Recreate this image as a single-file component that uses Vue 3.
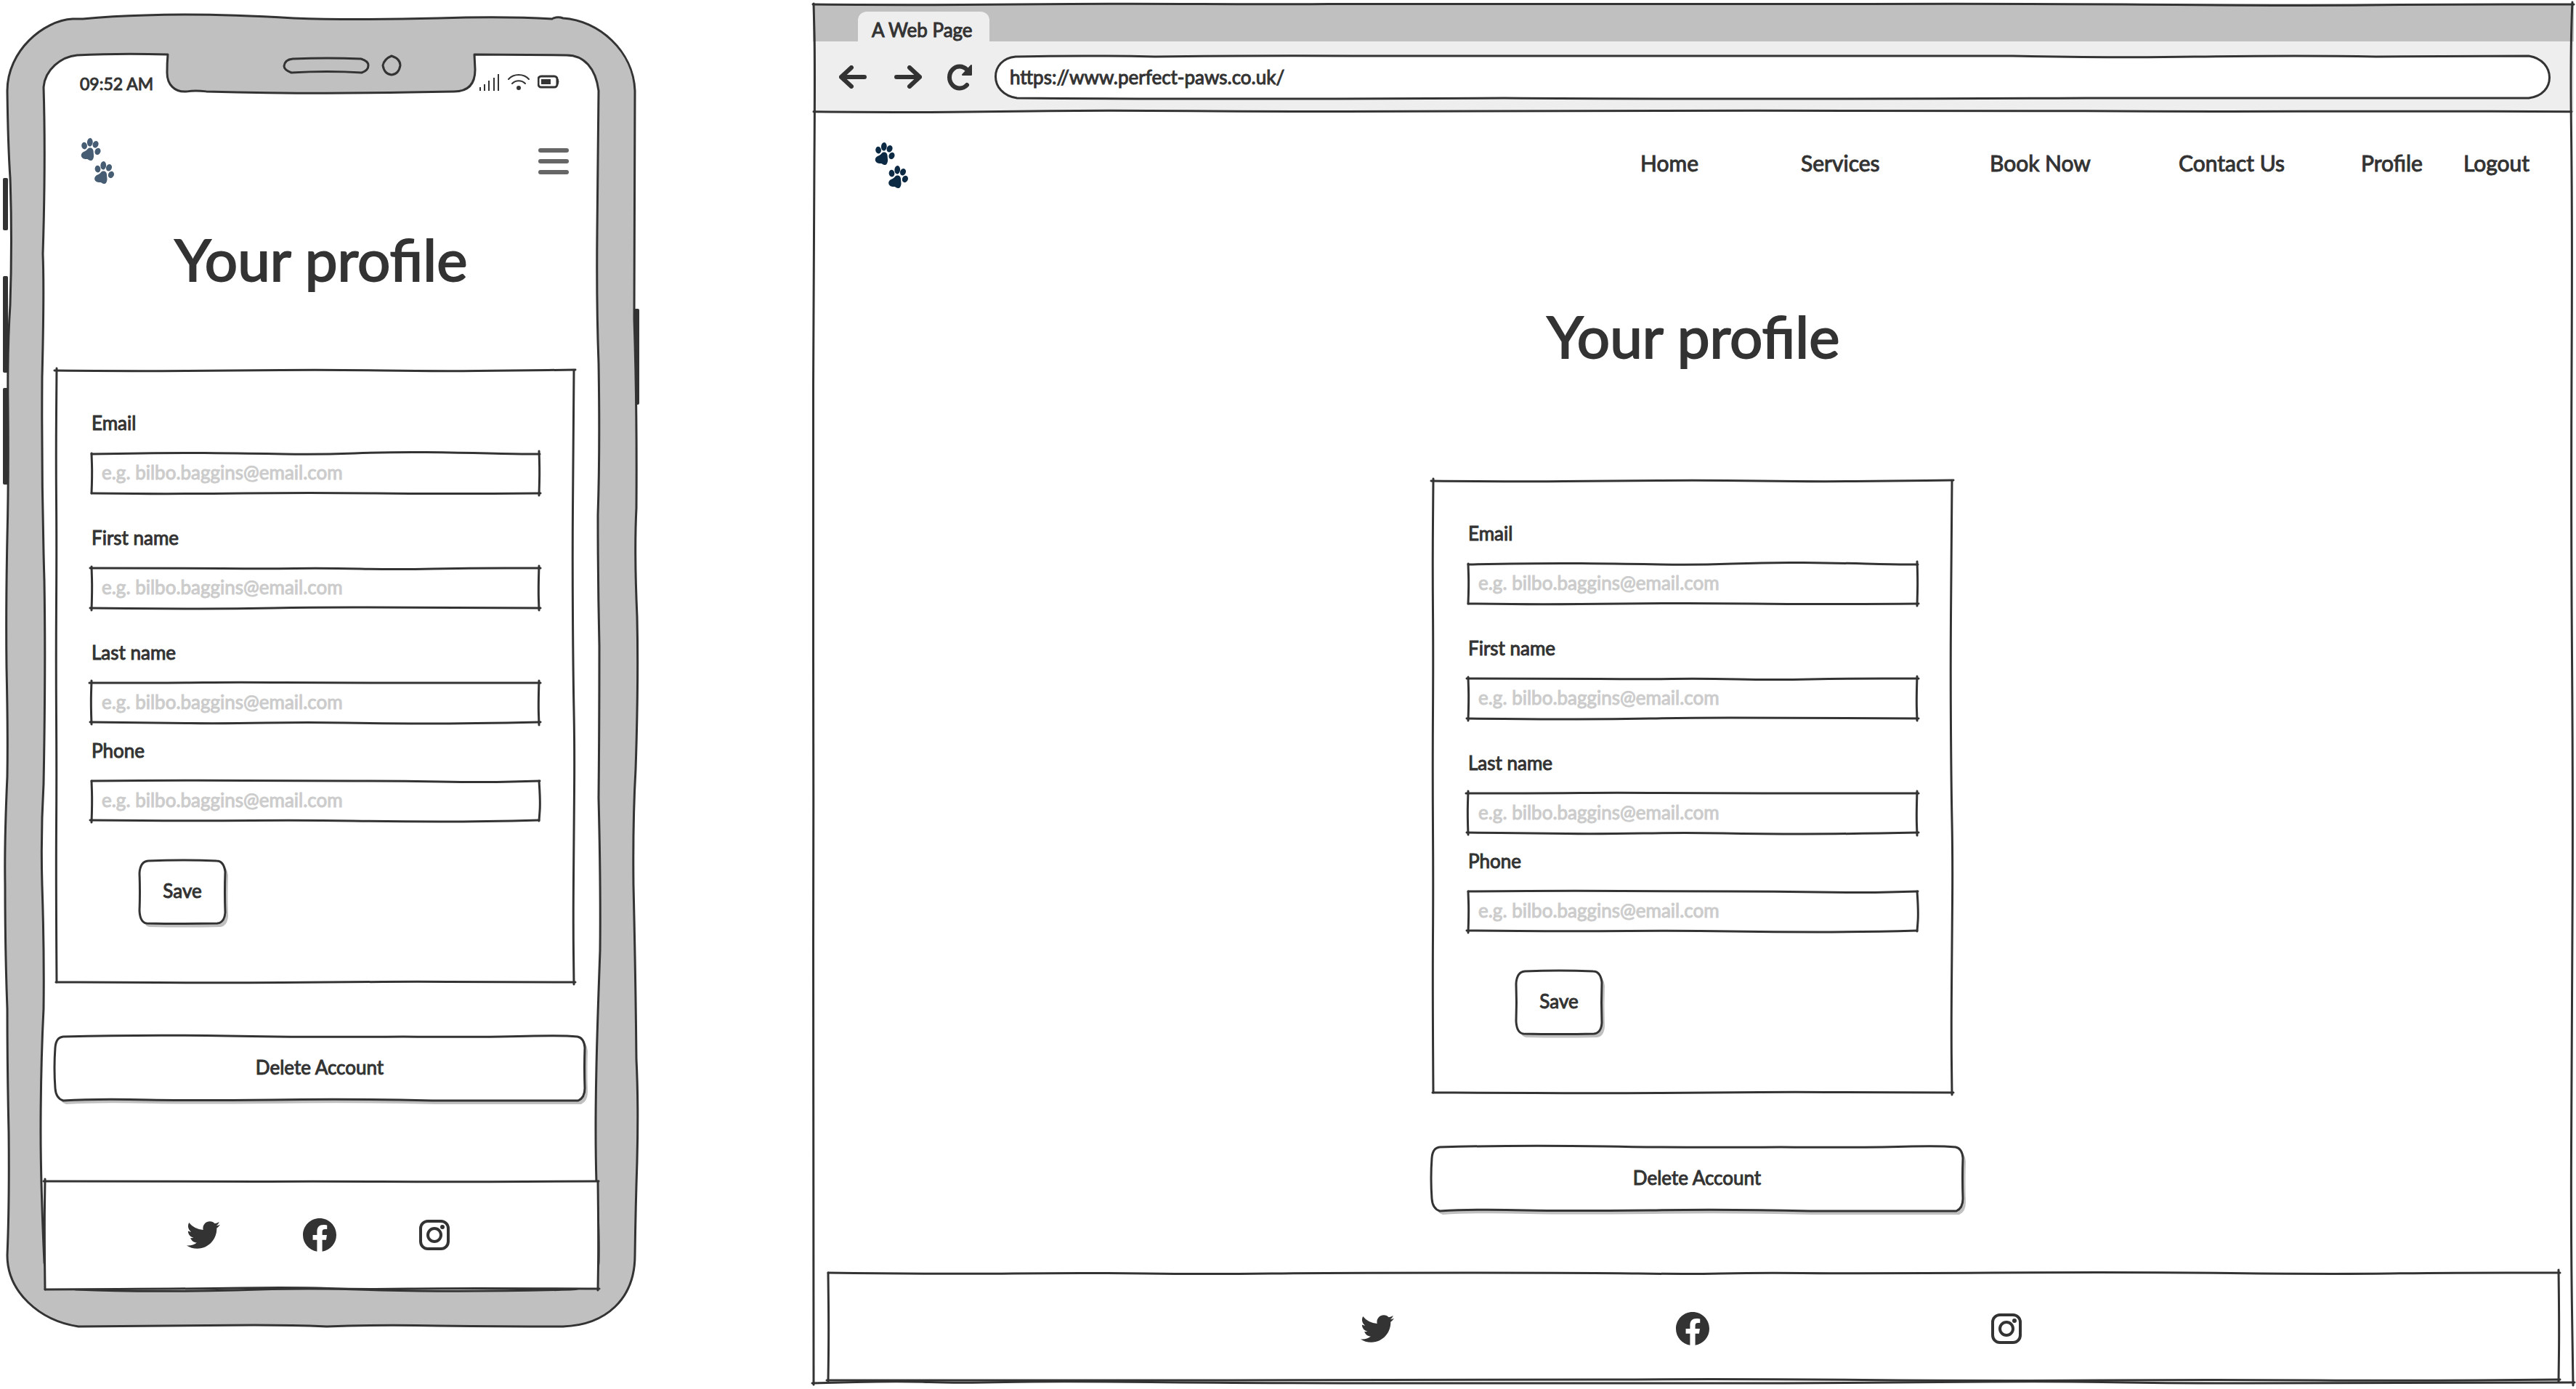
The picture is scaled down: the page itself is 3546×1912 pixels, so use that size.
<script setup>
import { h, reactive } from 'vue'

/* Turns a list of [x, y] points into one soft hand-drawn stroke. */
function stroke(points) {
  const [first, ...rest] = points
  let d = `M${first[0]} ${first[1]}`
  for (let i = 0; i < rest.length - 1; i++) {
    const [x, y] = rest[i]
    const [nx, ny] = rest[i + 1]
    d += ` Q${x} ${y} ${(x + nx) / 2} ${(y + ny) / 2}`
  }
  const last = rest[rest.length - 1]
  return `${d} L${last[0]} ${last[1]}`
}

/* Ink outline that stretches with the box it belongs to. */
const Sketch = (props) =>
  h(
    'svg',
    { viewBox: props.box, preserveAspectRatio: 'none', 'aria-hidden': 'true' },
    props.shapes.map((s) =>
      h('path', {
        d: s.d,
        fill: s.fill || 'none',
        stroke: s.ink === false ? 'none' : '#333',
        'stroke-width': 3,
        'stroke-linecap': 'round',
        'stroke-linejoin': 'round',
        'vector-effect': 'non-scaling-stroke',
        transform: s.shift
      })
    )
  )
Sketch.props = ['box', 'shapes']

const lines = (...edges) => edges.map((e) => ({ d: stroke(e) }))

const inputFrames = [
  lines(
    [[0, 1], [92, -1], [219, 0], [310, 2], [414, -2], [506, -1], [586, 1], [617, 1]],
    [[616, -3], [617, 20], [616, 58]],
    [[618, 55], [480, 56], [300, 54], [120, 56], [0, 55]],
    [[0, 55], [1, 30], [0, 0]]
  ),
  lines(
    [[-2, 0], [120, 0], [240, 1], [320, 0], [420, 2], [520, 0], [618, 0]],
    [[616, -3], [615, 28], [616, 58]],
    [[618, 55], [420, 54], [300, 54], [200, 56], [100, 56], [-2, 55]],
    [[0, 58], [1, 30], [0, -2]]
  ),
  lines(
    [[-3, 0], [110, 0], [200, -1], [330, 0], [480, 0], [618, 0]],
    [[616, -3], [615, 28], [616, 58]],
    [[618, 54], [520, 56], [400, 56], [300, 54], [180, 56], [90, 55], [-2, 54]],
    [[0, 57], [-1, 30], [0, -3]]
  ),
  lines(
    [[0, 0], [120, -1], [300, 0], [420, 0], [540, 2], [617, 0]],
    [[616, 0], [618, 28], [616, 55]],
    [[616, 54], [540, 56], [420, 56], [300, 54], [140, 55], [-2, 54]],
    [[0, 57], [1, 30], [0, 0]]
  )
]

const cardFrame = lines(
  [[-2, 0], [120, 1], [240, 0], [380, -1], [520, 1], [640, 0], [715, -1]],
  [[713, 0], [712, 120], [711, 260], [712, 420], [714, 520], [713, 640], [712, 760], [713, 847]],
  [[715, 844], [580, 844], [500, 843], [400, 844], [220, 845], [60, 844], [0, 844]],
  [[1, 844], [0, 700], [1, 560], [0, 400], [1, 240], [0, 120], [1, -3]]
)

const saveShape =
  'M12 1 Q60 -1 106 1 Q116 1 118 16 Q117 44 118 72 Q117 86 107 87 Q60 88 10 87 Q1 86 0 70 Q1 44 0 18 Q1 2 12 1Z'
const saveFrame = [
  { d: saveShape, fill: '#c0c0c0', ink: false, shift: 'translate(4 5)' },
  { d: saveShape, fill: '#fff' }
]

const deleteShape =
  'M12 1 Q120 -2 240 0 Q330 2 480 1 Q600 2 660 0 Q700 -1 720 1 Q729 3 730 16 Q729 44 730 72 Q730 85 721 89 Q600 89 520 89 Q400 86 300 88 Q180 89 130 88 Q60 86 12 89 Q2 86 1 72 Q-1 44 1 16 Q2 2 12 1Z'
const deleteFrame = [
  { d: deleteShape, fill: '#c0c0c0', ink: false, shift: 'translate(4 5)' },
  { d: deleteShape, fill: '#fff' }
]

const phoneBody = [
  {
    d: 'M96 6 C56 8 6 50 6 105 Q7 180 10 225 Q13 310 10 400 Q6 460 7 540 Q8 640 6 720 Q4 820 5 900 Q7 990 6 1050 Q2 1140 3 1200 Q3 1290 6 1370 Q6 1450 8 1540 Q9 1640 6 1710 C6 1760 50 1800 104 1808 Q250 1807 346 1806 Q400 1806 446 1808 Q520 1805 600 1807 Q700 1808 771 1808 C830 1806 870 1770 870 1710 Q871 1640 873 1580 Q875 1500 872 1440 Q871 1330 868 1200 Q867 1110 871 1040 Q875 920 873 830 Q869 740 872 680 Q873 540 869 420 Q870 260 870 105 C868 50 820 8 771 5 Q763 2 756 6 Q690 2 600 5 Q480 8 400 5 Q280 -2 196 1 Q150 2 110 6 Z',
    fill: '#c0c0c0'
  }
]

const phoneScreen = [
  {
    d: 'M102 56 Q160 53 227 55 Q226 66 226 80 C226 96 236 108 254 106 Q264 104 280 106 Q430 110 560 107 L621 106 C644 106 650 92 650 76 L649 55 L776 56 C800 56 816 74 820 105 Q819 200 818 300 Q817 400 820 480 Q822 600 819 690 Q819 780 821 870 Q821 980 820 1080 Q823 1200 822 1290 Q818 1400 817 1450 Q815 1540 817 1610 Q821 1680 820 1720 C819 1740 806 1757 781 1757 Q640 1761 520 1758 Q420 1754 320 1758 Q190 1761 101 1757 C80 1755 60 1740 57 1720 Q52 1610 52 1540 Q52 1450 56 1370 Q57 1290 54 1200 Q52 1130 56 1060 Q59 900 57 780 Q53 640 54 500 Q57 380 55 330 Q59 200 56 100 C58 76 80 58 102 56Z',
    fill: '#fff'
  }
]

const speaker = [
  { d: 'M12 1 Q60 -1 106 1 Q116 4 116 10 Q116 17 107 20 Q60 17 10 20 Q0 16 0 11 Q1 2 12 1Z' }
]
const camera = [{ d: 'M12 0 Q24 4 24 13 Q22 25 12 26 Q2 25 0 13 Q2 4 12 0Z' }]

const browserFrame = lines(
  [[0, 1], [130, 2], [280, 1], [430, 0], [640, 1], [780, 0], [1200, 1], [1700, 0], [2050, 3], [2230, 1], [2424, 1]],
  [[2422, -2], [2419, 60], [2422, 300], [2420, 700], [2423, 1100], [2421, 1450], [2420, 1700], [2423, 1905]],
  [[2425, 1901], [2100, 1902], [1850, 1902], [1700, 1899], [1400, 1902], [1100, 1902], [600, 1902], [330, 1899], [200, 1902], [120, 1899], [-1, 1902]],
  [[1, 1904], [0, 1500], [1, 1100], [0, 700], [1, 350], [3, 80], [1, 0]],
  [[1, 149], [130, 150], [250, 149], [400, 147], [640, 149], [1000, 148], [1600, 147], [1900, 149], [2200, 148], [2421, 149]]
)

const urlFrame = [
  {
    d: 'M28 1 Q120 -1 220 1 Q350 -1 520 0 L1400 0 Q1550 3 1650 1 Q1800 -1 1900 1 L2110 0 C2148 6 2148 54 2110 58 L1500 58 Q1000 60 700 58 Q300 60 30 58 C-10 52 -8 4 28 1Z',
    fill: '#fff'
  }
]

const phoneFooter = lines(
  [[-2, 0], [220, 1], [360, 0], [560, 1], [761, 0]],
  [[760, 0], [761, 80], [760, 150]],
  [[762, 148], [560, 147], [440, 149], [340, 146], [200, 148], [0, 149]],
  [[0, 149], [-1, 70], [0, -3]]
)

const browserFooter = lines(
  [[0, 0], [160, 2], [350, 0], [520, 2], [700, 0], [1050, 0], [1180, 2], [1280, 0], [1400, 1], [1800, -1], [2060, 2], [2240, 0], [2384, 0]],
  [[2382, -4], [2383, 70], [2382, 150]],
  [[2384, 147], [2200, 149], [1900, 147], [1600, 149], [1250, 146], [900, 148], [200, 148], [-2, 148]],
  [[0, 149], [1, 90], [0, 0]]
)

const fields = [
  { id: 'email', label: 'Email', type: 'email' },
  { id: 'first', label: 'First name', type: 'text' },
  { id: 'last', label: 'Last name', type: 'text' },
  { id: 'phone', label: 'Phone', type: 'tel' }
]
const views = reactive([
  { kind: 'phone', values: {}, footerBox: '0 0 760 148', footer: phoneFooter },
  { kind: 'browser', values: {}, footerBox: '0 0 2382 148', footer: browserFooter }
])
const links = ['Home', 'Services', 'Book Now', 'Contact Us', 'Profile', 'Logout']
</script>

<template>
  <div class="board">
    <section v-for="view in views" :key="view.kind" :class="view.kind">
      <template v-if="view.kind === 'phone'">
        <span class="side-key key-a"></span>
        <span class="side-key key-b"></span>
        <span class="side-key key-c"></span>
        <span class="side-key key-d"></span>
        <Sketch class="ink" box="0 0 876 1810" :shapes="phoneBody" />
        <Sketch class="ink" box="0 0 876 1810" :shapes="phoneScreen" />
        <div class="sensors">
          <Sketch class="speaker" box="0 0 116 20" :shapes="speaker" />
          <Sketch class="camera" box="0 0 24 26" :shapes="camera" />
        </div>
        <div class="status">
          <time>09:52 AM</time>
          <div class="status-icons">
            <svg width="28" height="24" viewBox="0 0 28 24" fill="none" stroke="#333" stroke-width="2">
              <path d="M1 24v-5M7 24V15M13 24V10M20 24V6M26 24V1" />
            </svg>
            <svg width="30" height="24" viewBox="0 0 30 24" fill="none" stroke="#333" stroke-width="2" stroke-linecap="round">
              <path d="M1 8C8 0 22 0 29 8M6 14C11 9 19 9 24 14" />
              <ellipse cx="15" cy="20" rx="2" ry="2" fill="#333" />
            </svg>
            <svg width="30" height="24" viewBox="0 0 30 24">
              <rect x="1" y="4" width="26" height="15" rx="4" fill="none" stroke="#333" stroke-width="3" />
              <rect x="5" y="8" width="13" height="7" fill="#333" />
              <path d="M28 8q2 3 0 7z" fill="#333" stroke="#333" />
            </svg>
          </div>
        </div>
      </template>

      <template v-else>
        <div class="tabs"><div class="tab">A Web Page</div></div>
        <div class="toolbar">
          <button class="tool" type="button" aria-label="Back">
            <svg width="38" height="32" viewBox="0 0 38 32"><path d="M17 3L3 16l14 13M3 16h32" /></svg>
          </button>
          <button class="tool forward" type="button" aria-label="Forward">
            <svg width="38" height="32" viewBox="0 0 38 32"><path d="M21 3l14 13-14 13M35 16H3" /></svg>
          </button>
          <button class="tool reload" type="button" aria-label="Reload">
            <svg width="38" height="38" viewBox="0 0 38 38">
              <path d="M29 30A14 15 0 1 1 29 9" />
              <path class="solid" d="M35 3v13H23z" />
            </svg>
          </button>
          <div class="url">
            <Sketch class="ink" box="0 0 2139 58" :shapes="urlFrame" />
            <input type="text" aria-label="Address" value="https://www.perfect-paws.co.uk/" />
          </div>
        </div>
        <Sketch class="ink" box="0 0 2424 1903" :shapes="browserFrame" />
      </template>

      <header class="site-head">
        <a class="logo" href="#" aria-label="Perfect Paws">
          <svg width="47" height="64" viewBox="0 0 48 66" fill="currentColor">
            <g v-for="n in 2" :key="n" :transform="n === 1 ? 'translate(0 0)' : 'translate(19 33)'">
              <ellipse cx="5" cy="11" rx="4" ry="5" transform="rotate(-6 5 11)" />
              <ellipse cx="13" cy="6" rx="4" ry="6" transform="rotate(4 13 6)" />
              <ellipse cx="21" cy="9" rx="4" ry="5" transform="rotate(22 21 9)" />
              <ellipse cx="24" cy="19" rx="4" ry="5" transform="rotate(24 24 19)" />
              <path d="M12 14c4-1 6 2 6 6 0 3 1 5 0 8-1 4-4 5-7 3-2-2-5 0-8-2-4-3-3-8 2-10 4-1 4-4 7-5z" />
            </g>
          </svg>
        </a>
        <button v-if="view.kind === 'phone'" class="menu" type="button" aria-label="Menu">
          <span></span><span></span><span></span>
        </button>
        <nav v-else class="nav">
          <a v-for="link in links" :key="link" href="#">{{ link }}</a>
        </nav>
      </header>

      <h1>Your profile</h1>

      <main class="profile">
        <form class="card" @submit.prevent>
          <Sketch class="ink" box="0 0 714 844" :shapes="cardFrame" />
          <div v-for="(field, i) in fields" :key="field.id" class="field">
            <label :for="`${view.kind}-${field.id}`">{{ field.label }}</label>
            <div class="control">
              <Sketch class="ink" box="0 0 616 55" :shapes="inputFrames[i]" />
              <input
                :id="`${view.kind}-${field.id}`"
                v-model="view.values[field.id]"
                :type="field.type"
                placeholder="e.g. bilbo.baggins@email.com"
              />
            </div>
          </div>
          <button class="sketch-button save" type="submit">
            <Sketch class="ink" box="0 0 118 87" :shapes="saveFrame" />
            <span>Save</span>
          </button>
        </form>
        <button class="sketch-button delete" type="button">
          <Sketch class="ink" box="0 0 730 89" :shapes="deleteFrame" />
          <span>Delete Account</span>
        </button>
      </main>

      <footer class="social">
        <Sketch class="ink" :box="view.footerBox" :shapes="view.footer" />
        <a href="#" aria-label="Twitter">
          <svg width="46" height="46" viewBox="0 0 512 512" fill="#333">
            <path d="M459.37 151.716c.325 4.548.325 9.097.325 13.645 0 138.72-105.583 298.558-298.558 298.558-59.452 0-114.68-17.219-161.137-47.106 8.447.974 16.568 1.299 25.34 1.299 49.055 0 94.213-16.568 130.274-44.832-46.132-.975-84.792-31.188-98.112-72.772 6.498.974 12.995 1.624 19.818 1.624 9.421 0 18.843-1.3 27.614-3.573-48.081-9.747-84.143-51.98-84.143-102.985v-1.299c13.969 7.797 30.214 12.67 47.431 13.319-28.264-18.843-46.781-51.005-46.781-87.391 0-19.492 5.197-37.36 14.294-52.954 51.655 63.675 129.3 105.258 216.365 109.807-1.624-7.797-2.599-15.918-2.599-24.04 0-57.828 46.782-104.934 104.934-104.934 30.213 0 57.502 12.67 76.67 33.137 23.715-4.548 46.456-13.32 66.599-25.34-7.798 24.366-24.366 44.833-46.132 57.827 21.117-2.273 41.584-8.122 60.426-16.243-14.292 20.791-32.161 39.308-52.628 54.253z" />
          </svg>
        </a>
        <a href="#" aria-label="Facebook">
          <svg width="46" height="46" viewBox="8 8 496 496" fill="#333">
            <path d="M504 256C504 119 393 8 256 8S8 119 8 256c0 123.78 90.69 226.38 209.25 245V327.69h-63V256h63v-54.64c0-62.15 37-96.48 93.67-96.48 27.14 0 55.52 4.84 55.52 4.84v61h-31.28c-30.8 0-40.41 19.12-40.41 38.73V256h68.78l-11 71.69h-57.78V501C413.31 482.38 504 379.78 504 256z" />
          </svg>
        </a>
        <a href="#" aria-label="Instagram">
          <svg width="42" height="42" viewBox="0 0 42 42" fill="none" stroke="#333" stroke-width="4">
            <rect x="2" y="2" width="38" height="38" rx="10" />
            <circle cx="21" cy="21" r="9" />
            <circle cx="32" cy="10" r="3" fill="#333" stroke="none" />
          </svg>
        </a>
      </footer>
    </section>
  </div>
</template>

<style>
body {
  background: #fff;
}
</style>

<style scoped>
.board {
  display: grid;
  grid-template-columns: 876fr 2424fr;
  column-gap: 239px;
  align-items: start;
  box-sizing: border-box;
  padding: 5px 3px 5px 4px;
  color: #333;
  font: 400 26px/32px Lato, "Open Sans", sans-serif;
  -webkit-text-stroke: 1px;
  overflow: hidden;
}

.phone,
.browser,
.card,
.control,
.url,
.social,
.sketch-button {
  position: relative;
}

.ink {
  position: absolute;
  inset: 0;
  width: 100%;
  height: 100%;
  overflow: visible;
  pointer-events: none;
}

a {
  color: inherit;
  text-decoration: none;
}

button,
input {
  font: inherit;
  color: inherit;
  border: 0;
  padding: 0;
  background: none;
  outline: 0;
}

svg {
  display: block;
}

/* Phone shell */
.phone {
  margin-top: 15px;
  padding: 75px 56px 54px;
}

.side-key {
  position: absolute;
  left: 0;
  width: 7px;
  border-radius: 2px;
  background: #333;
}

.key-a {
  top: 225px;
  height: 72px;
}

.key-b {
  top: 360px;
  height: 133px;
}

.key-c {
  top: 514px;
  height: 133px;
}

.key-d {
  top: 405px;
  right: 0;
  left: auto;
  height: 132px;
}

.sensors {
  position: absolute;
  top: 57px;
  left: 0;
  right: 0;
  display: flex;
  align-items: center;
  justify-content: center;
  gap: 20px;
  padding-left: 58px;
  box-sizing: border-box;
}

.speaker {
  width: 116px;
  height: 20px;
  overflow: visible;
}

.camera {
  width: 24px;
  height: 26px;
  overflow: visible;
}

.status {
  position: relative;
  display: flex;
  align-items: center;
  justify-content: space-between;
  height: 40px;
  padding: 0 54px 0 50px;
  font-size: 23px;
}

.status-icons {
  display: flex;
  gap: 11px;
  padding-bottom: 4px;
}

/* Browser shell */
.tabs {
  display: flex;
  height: 52px;
  padding-left: 62px;
  align-items: flex-end;
  background: #c0c0c0;
}

.tab {
  height: 41px;
  padding: 0 23px 0 19px;
  border-radius: 12px 12px 0 0;
  background: #eee;
  line-height: 50px;
}

.toolbar {
  display: flex;
  align-items: center;
  height: 97px;
  padding: 0 33px 0 36px;
  background: #eee;
}

.tool path {
  fill: none;
  stroke: #333;
  stroke-width: 6;
  stroke-linecap: round;
  stroke-linejoin: round;
}

.tool .solid {
  fill: #333;
  stroke-width: 2;
}

.forward {
  margin-left: 38px;
}

.reload {
  margin: 0 30px 0 33px;
}

.url {
  flex: 1;
  height: 58px;
}

.url input {
  position: relative;
  box-sizing: border-box;
  width: 100%;
  height: 58px;
  padding: 0 20px;
}

/* Shared page */
.site-head {
  position: relative;
  display: flex;
  justify-content: space-between;
  height: 64px;
}

.phone .site-head {
  margin-top: 55px;
  padding: 0 41px 0 51px;
  align-items: center;
  color: #465d73;
}

.browser .site-head {
  margin-top: 42px;
  padding: 0 3px 0 85px;
  align-items: center;
}

.browser .logo {
  color: #0d2a45;
}

.menu {
  display: grid;
  gap: 9px;
  width: 42px;
}

.menu span {
  height: 6px;
  border-radius: 3px;
  background: #666;
}

.nav {
  display: grid;
  grid-template-columns: 221px 260px 260px 251px 141px 149px;
  padding-bottom: 8px;
  font-size: 30px;
  line-height: 36px;
}

h1 {
  position: relative;
  margin: 54px 0 106px;
  font-size: 80px;
  font-weight: 400;
  line-height: 96px;
  text-align: center;
  -webkit-text-stroke: 2px;
}

.browser h1 {
  margin: 154px 0 152px;
}

.profile {
  box-sizing: border-box;
}

.phone .profile {
  margin: 0 19px 0 15px;
}

.browser .profile {
  max-width: 742px;
  margin: 0 auto;
  padding-left: 10px;
}

.card {
  margin: 0 14px 74px 2px;
  padding: 56px 49px 81px;
}

.field {
  margin-bottom: 45px;
}

.field:nth-of-type(3) {
  margin-bottom: 22px;
}

.field:nth-of-type(4) {
  margin-bottom: 54px;
}

.field label {
  position: relative;
  display: block;
  width: max-content;
  margin-bottom: 26px;
}

.control input {
  position: relative;
  display: block;
  box-sizing: border-box;
  width: 100%;
  height: 55px;
  padding: 0 14px 4px;
}

.control input::placeholder {
  color: #ccc;
  opacity: 1;
}

.sketch-button {
  display: block;
  padding-bottom: 4px;
}

.sketch-button span {
  position: relative;
}

.save {
  width: 118px;
  height: 87px;
  margin-left: 66px;
}

.delete {
  width: 100%;
  height: 89px;
}

.social {
  display: flex;
  align-items: center;
  box-sizing: border-box;
  height: 148px;
  background: #fff;
}

.social a {
  position: relative;
}

.phone .social {
  gap: 114px;
  margin: 111px 1px 0 2px;
  padding-left: 195px;
}

.browser .social {
  justify-content: center;
  gap: 388px;
  margin: 85px 21px 5px;
  padding: 6px 6px 0 0;
}
</style>
